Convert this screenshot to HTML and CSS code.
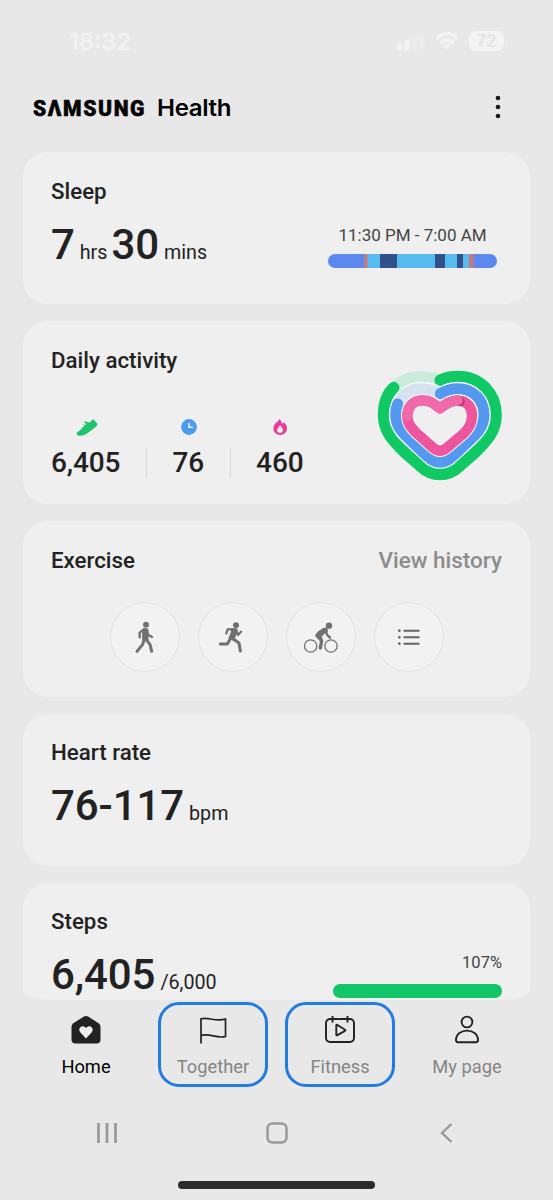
FILE: index.html
```html
<!DOCTYPE html>
<html lang="en">
<head>
<meta charset="utf-8">
<title>Samsung Health</title>
<link rel="stylesheet" href="styles.css">
</head>
<body>
<div class="screen">
  <div class="status">
    <span class="time">18:32</span>
    <div class="status-icons">
      <svg class="signal" width="28" height="20" viewBox="0 0 28 20"><g fill="#f3f3f3"><rect x="0" y="12" width="5" height="7" rx="1.5"/><rect x="7.5" y="9" width="5" height="10" rx="1.5"/></g><g fill="#ebebeb"><rect x="15" y="5" width="5" height="14" rx="1.5"/><rect x="22.500" y="2" width="5" height="17" rx="1.500"/></g></svg>
      <svg class="wifi" width="24" height="20" viewBox="0 0 24 20" fill="none" stroke="#f3f3f3" stroke-width="3.400"><path d="M1.500 7.500Q12-2.500 22.500 7.500M5.500 12Q12 6 18.500 12"/><path d="M8.300 14.500Q12 11.500 15.700 14.500L12 18.500z" fill="#f3f3f3" stroke="none"/></svg>
      <span class="battery">72</span><i class="battery-tip"></i>
    </div>
  </div>

  <header class="header">
    <div class="brand"><span class="brand-name">SΛMSUNG</span><span class="brand-product">Health</span></div>
    <svg width="10" height="26" viewBox="0 0 10 26" fill="#1c1c1c"><circle cx="5" cy="4" r="2.300"/><circle cx="5" cy="13" r="2.300"/><circle cx="5" cy="22" r="2.300"/></svg>
  </header>

  <main class="cards">
    <section class="card sleep">
      <div>
        <h2>Sleep</h2>
        <p class="value"><b>7</b><span class="hrs">hrs</span><b>30</b><span>mins</span></p>
      </div>
      <div class="sleep-side">
        <span class="sleep-time">11:30 PM - 7:00 AM</span>
        <svg class="sleep-bar" width="169" height="14" viewBox="0 0 169 14"><path fill="#5d88f0" d="M0 0h169v14H0z"/><path fill="#57bbf0" d="M36 0h107v14H36z"/><path fill="#31518a" d="M52 0h17v14H52zM107 0h10v14h-10zM129 0h6v14h-6z"/><path fill="#c57b7d" d="M36 0h3.500v14H36zM141 0h4.500v14H141z"/></svg>
      </div>
    </section>

    <section class="card activity">
      <div>
        <h2>Daily activity</h2>
        <div class="stats">
          <div class="stat">
            <svg width="22" height="18" viewBox="107 233 66 54"><path fill="#1fc46c" d="M109 280Q109 277 113 274L126 264L124 259L129 261L132 257L127 252L135 254L138 251L132 247L133 243L143 246Q151 248 155 238Q160 236 163 241Q170 246 171 252Q171 257 166 260L142 278Q133 286 121 286Q109 286 109 280z"/></svg>
            <span>6,405</span>
          </div>
          <div class="stat">
            <svg width="18" height="18" viewBox="0 0 18 18"><circle cx="9" cy="9" r="7.900" fill="#4a9ced"/><path d="M9 5v4.300h3.800" fill="none" stroke="#eef6ff" stroke-width="1.500"/></svg>
            <span>76</span>
          </div>
          <div class="stat">
            <svg width="18" height="18" viewBox="693 233 54 54"><path fill="#e73d98" d="M719 236Q724 242 727 251Q730 249 731 246Q741 253 741 264C741 291 700 290 700 264Q700 254 708 247Q716 242 719 236z"/><path fill="#fbeaf4" d="M720 255C726 262 729 266 729 270C729 281 711 281 711 270C711 266 715 262 720 255z"/></svg>
            <span>460</span>
          </div>
        </div>
      </div>
      <svg class="heart" width="150" height="130" viewBox="0 0 450 390" fill="none" stroke-linecap="round" stroke-linejoin="round">
        <path stroke="#c9ecdc" stroke-width="34" d="M86 83C110 60 140 50 168 50Q200 50 226 62"/>
        <path stroke="#11c964" stroke-width="35" d="M226 61C242 53 258 50 278 50C345 50 393 100 393 165C393 215 365 243 330 278L285 317C248 352 202 352 165 317L120 278C85 243 56 215 56 165C56 130 68 100 86 83"/>
        <path stroke="#f4fbf8" stroke-width="41" d="M226 103C242 91 258 86 278 86C325 86 357 120 357 165C357 200 335 222 312 243L262 289C240 311 210 311 188 289L138 243C115 222 92 200 92 165C92 120 125 86 170 86Q203 86 226 103"/>
        <path stroke="#d7e2f0" stroke-width="33" d="M100 130Q120 86 170 86Q203 86 226 103"/>
        <path stroke="#5598ef" stroke-width="33" d="M226 101C242 91 258 86 278 86C325 86 357 120 357 165C357 200 335 222 312 243L262 290C240 312 210 312 188 290L138 243C115 222 92 200 92 165Q92 145 98 132"/>
        <path stroke="#f7f7ff" stroke-width="37" d="M225 145C203 127 192 121 172 121C143 121 127 142 127 167C127 190 138 203 155 220L205 264C218 275 232 275 245 264L297 220C313 203 321 190 321 165C321 142 305 121 278 121C258 121 245 129 225 145z"/>
        <path fill="#efefef" stroke="#ed569f" stroke-width="31" d="M225 145C203 127 192 121 172 121C143 121 127 142 127 167C127 190 138 203 155 220L205 264C218 275 232 275 245 264L297 220C313 203 321 190 321 165C321 142 305 121 278 121C258 121 245 129 225 145z"/>
        <path stroke="#c23478" stroke-width="28" d="M284 125h1"/>
        <path stroke="#f06aaa" stroke-width="31" d="M127 167C127 142 143 121 172 121C192 121 203 127 225 145Q250 124 278 121"/>
      </svg>
    </section>

    <section class="card exercise">
      <div class="card-head"><h2>Exercise</h2><a>View history</a></div>
      <div class="workouts">
        <div class="workout"><svg viewBox="29 35 210 210" fill="none" stroke="#717171" stroke-linecap="round" stroke-linejoin="round"><circle cx="137" cy="103" r="9" fill="#717171" stroke="none"/><path fill="#717171" stroke-width="5" d="M128 118Q135 113 142 118L142 149H128z"/><path stroke-width="7" d="M129 118L118 127V141M139 122L143 133L155 140"/><path stroke-width="9" d="M132 147L127 162L110 183M137 147L149 162L154 183"/></svg></div>
        <div class="workout"><svg viewBox="293 35 210 210" fill="none" stroke="#717171" stroke-linecap="round" stroke-linejoin="round"><circle cx="407" cy="105" r="9" fill="#717171" stroke="none"/><path fill="#717171" stroke-width="5" d="M393 117Q403 113 410 119L405 133L400 149L387 143L395 124z"/><path stroke-width="7" d="M394 117H382L378 129M407 121L413 134L422 124"/><path stroke-width="9" d="M391 144L381 161H360M399 146L416 158L420 182"/></svg></div>
        <div class="workout"><svg viewBox="32 35 210 210" fill="none" stroke="#717171" stroke-linecap="round" stroke-linejoin="round"><circle cx="161" cy="106" r="9.500" fill="#717171" stroke="none"/><circle cx="106" cy="167" r="18.500" stroke-width="4"/><circle cx="167" cy="167" r="18.500" stroke-width="4"/><path fill="#717171" stroke-width="5" d="M122 134Q132 121 145 115Q153 112 155 119L155 123L144 130L136 139L139 146L127 141z"/><path stroke-width="7" d="M151 119L155 133L164 142"/><path stroke-width="10" d="M126 137L139 151L135 173"/></svg></div>
        <div class="workout"><svg viewBox="296 35 210 210" stroke="#666" stroke-linecap="round" stroke-width="6"><path d="M387 121h43M387 141h43M387 160h43"/><path stroke-width="8" d="M372 121h.1M372 141h.1M372 160h.1"/></svg></div>
      </div>
    </section>

    <section class="card heart-rate">
      <h2>Heart rate</h2>
      <p class="value"><b>76-117</b><span>bpm</span></p>
    </section>

    <section class="card steps">
      <div>
        <h2>Steps</h2>
        <p class="value"><b>6,405</b><span>/6,000</span></p>
      </div>
      <div class="steps-side"><span>107%</span><i></i></div>
    </section>
  </main>

  <nav class="tabs">
    <div class="tab active">
      <svg width="32" height="30" viewBox="0 0 32 30"><path fill="#222" d="M3.400 8.200L13.500 1.700Q16 .1 18.500 1.700L28.600 8.200Q30.500 9.500 30.500 12V24.500Q30.500 28.500 26.500 28.500H5.500Q1.500 28.500 1.500 24.500V12Q1.500 9.500 3.400 8.200z"/><path fill="#eee" d="M16 23.500L10.400 17.500C7 13 12.500 8.800 16 13C19.500 8.800 25 13 21.600 17.500z"/></svg>
      <span>Home</span>
    </div>
    <div class="tab outlined">
      <svg width="32" height="30" viewBox="0 0 32 30" fill="none" stroke="#222" stroke-width="1.700"><path d="M4 28.500V3.800C11 1.500 17 7 28.500 4.200V21.500C19 24 13 17.500 4 20.500"/></svg>
      <span>Together</span>
    </div>
    <div class="tab outlined">
      <svg width="32" height="30" viewBox="0 0 32 30" fill="none" stroke="#222" stroke-width="1.900" stroke-linejoin="round"><rect x="2" y="4" width="28" height="23" rx="4"/><path d="M8.500 1v6.500M23.500 1v6.500M12.300 10.200Q12.300 9.400 13 9.800L21 14.800Q21.700 15.300 21 15.800L13 20.300Q12.300 20.600 12.300 19.800z"/></svg>
      <span>Fitness</span>
    </div>
    <div class="tab">
      <svg width="32" height="30" viewBox="0 0 32 30" fill="none" stroke="#222" stroke-width="1.900"><circle cx="16" cy="7" r="5.400"/><path d="M5 25C5 12.500 27 12.500 27 25Q27 27.200 25 27.200H7Q5 27.200 5 25z"/></svg>
      <span>My page</span>
    </div>
  </nav>

  <div class="system">
    <svg width="24" height="24" viewBox="0 0 24 24" stroke="#999" stroke-width="2.700"><path d="M3.500 2v20M12 2v20M20.500 2v20"/></svg>
    <svg width="24" height="24" viewBox="0 0 24 24" fill="none" stroke="#999" stroke-width="2.500"><rect x="2.500" y="2.500" width="19" height="19" rx="5"/></svg>
    <svg width="24" height="24" viewBox="0 0 24 24" fill="none" stroke="#999" stroke-width="2.400"><path d="M17.500 3L8 12L17.500 21"/></svg>
  </div>
  <div class="home-indicator"></div>
</div>
</body>
</html>
```

FILE: styles.css
```css
* { box-sizing: border-box; }
body { margin: 0; background: #e8e8e8; color: #222; font-family: Roboto, sans-serif; }
h2, p { margin: 0; }
svg { display: block; flex: none; }
.screen { width: 553px; height: 1200px; overflow: hidden; display: flex; flex-direction: column; }

.status { height: 82px; padding: 0 46px 0 69px; display: flex; justify-content: space-between; align-items: center; font-family: Inter, sans-serif; }
.time { font-size: 23.500px; font-weight: 600; color: #f2f2f2; }
.status-icons { display: flex; align-items: center; }
.wifi { margin: 0 10px; }
.battery { width: 35px; height: 20px; border-radius: 7px; background: #f3f3f3; color: #e5e5e5; font-size: 17px; font-weight: 700; line-height: 20px; text-align: center; }
.battery-tip { width: 2px; height: 6px; margin-left: 1px; border-radius: 0 2px 2px 0; background: #eee; }

.header { height: 70px; padding: 0 50px 20px 33px; display: flex; justify-content: space-between; align-items: center; color: #000; }
.brand { padding-top: 2px; display: flex; align-items: baseline; }
.brand-name { width: 124px; font-size: 22.500px; line-height: 28px; font-weight: 900; letter-spacing: 1.700px; transform: scaleX(.94); transform-origin: 0 50%; white-space: nowrap; -webkit-text-stroke: .5px #000; }
.brand-product { font-family: Inter, sans-serif; font-size: 22.500px; line-height: 28px; font-weight: 600; letter-spacing: -.3px; transform: scaleX(1.07); transform-origin: 0 50%; }

.cards { height: 848px; padding: 0 23px; display: flex; flex-direction: column; gap: 17px; }
.card { flex: none; padding: 26px 28px 0; border-radius: 25px; background: #efefef; }
.card h2 { font-size: 22.300px; line-height: 27px; font-weight: 500; }
.sleep { height: 152px; display: flex; justify-content: space-between; }
.activity { height: 183px; display: flex; justify-content: space-between; }
.exercise { height: 175.500px; }
.heart-rate { height: 152px; padding-top: 25.500px; }
.steps { height: 117.500px; padding-top: 25.500px; display: flex; justify-content: space-between; border-radius: 25px 25px 30px 30px / 25px 25px 10px 10px; }

.value { margin-top: 16px; height: 48px; display: flex; align-items: baseline; gap: 5px; line-height: 48px; font-size: 19.700px; }
.value b { font-size: 42px; font-weight: 500; letter-spacing: -.1px; }
.hrs { margin-right: -1px; }

.sleep-side { width: 169px; margin: 46px 5px 0 0; display: flex; flex-direction: column; align-items: center; }
.sleep-time { font-size: 17px; line-height: 22px; color: #444; white-space: nowrap; }
.sleep-bar { margin-top: 8px; border-radius: 7px; }

.stats { margin-top: 44px; display: flex; }
.stat { display: flex; flex-direction: column; align-items: center; gap: 12px; }
.stat svg { margin-left: 2px; }
.stat span { padding: 0 25.500px 0 25.500px; border-left: 1px solid #d6d6d6; font-size: 28px; line-height: 29px; font-weight: 500; letter-spacing: -.1px; }
.stat:first-child { align-items: flex-start; }
.stat:first-child svg { margin-left: 25px; }
.stat:first-child span { padding-left: 0; border: 0; }
.heart { margin: 13px -13px 0 0; }

.card-head { display: flex; justify-content: space-between; }
.card-head a { font-size: 22.500px; line-height: 27px; font-weight: 500; color: #8d8d8d; }
.workouts { margin-top: 28px; display: flex; justify-content: center; gap: 18px; }
.workout { width: 70px; height: 70px; border-radius: 50%; background: #f2f2f2; box-shadow: inset 0 0 0 1px #e2e2e2; }

.steps-side { width: 169px; margin-top: 45px; display: flex; flex-direction: column; align-items: flex-end; font-size: 16.500px; line-height: 20px; color: #444; }
.steps-side i { width: 169px; height: 14px; margin-top: 11px; border-radius: 7px; background: #12c568; }

.tabs { height: 89px; padding: 2px 31px; display: grid; grid-template-columns: repeat(4, 110px); gap: 17px; }
.tab { height: 85px; padding-top: 10px; display: flex; flex-direction: column; align-items: center; gap: 11px; border: 3px solid transparent; border-radius: 21px; font-size: 18.300px; line-height: 22px; color: #858585; }
.active { color: #000; }
.outlined { border-color: #217be0; }

.system { padding: 32px 95px 0; display: flex; justify-content: space-between; }
.home-indicator { width: 197px; height: 8px; margin: 36px auto 0 178px; border-radius: 4px; background: #2b2b2b; }
```
